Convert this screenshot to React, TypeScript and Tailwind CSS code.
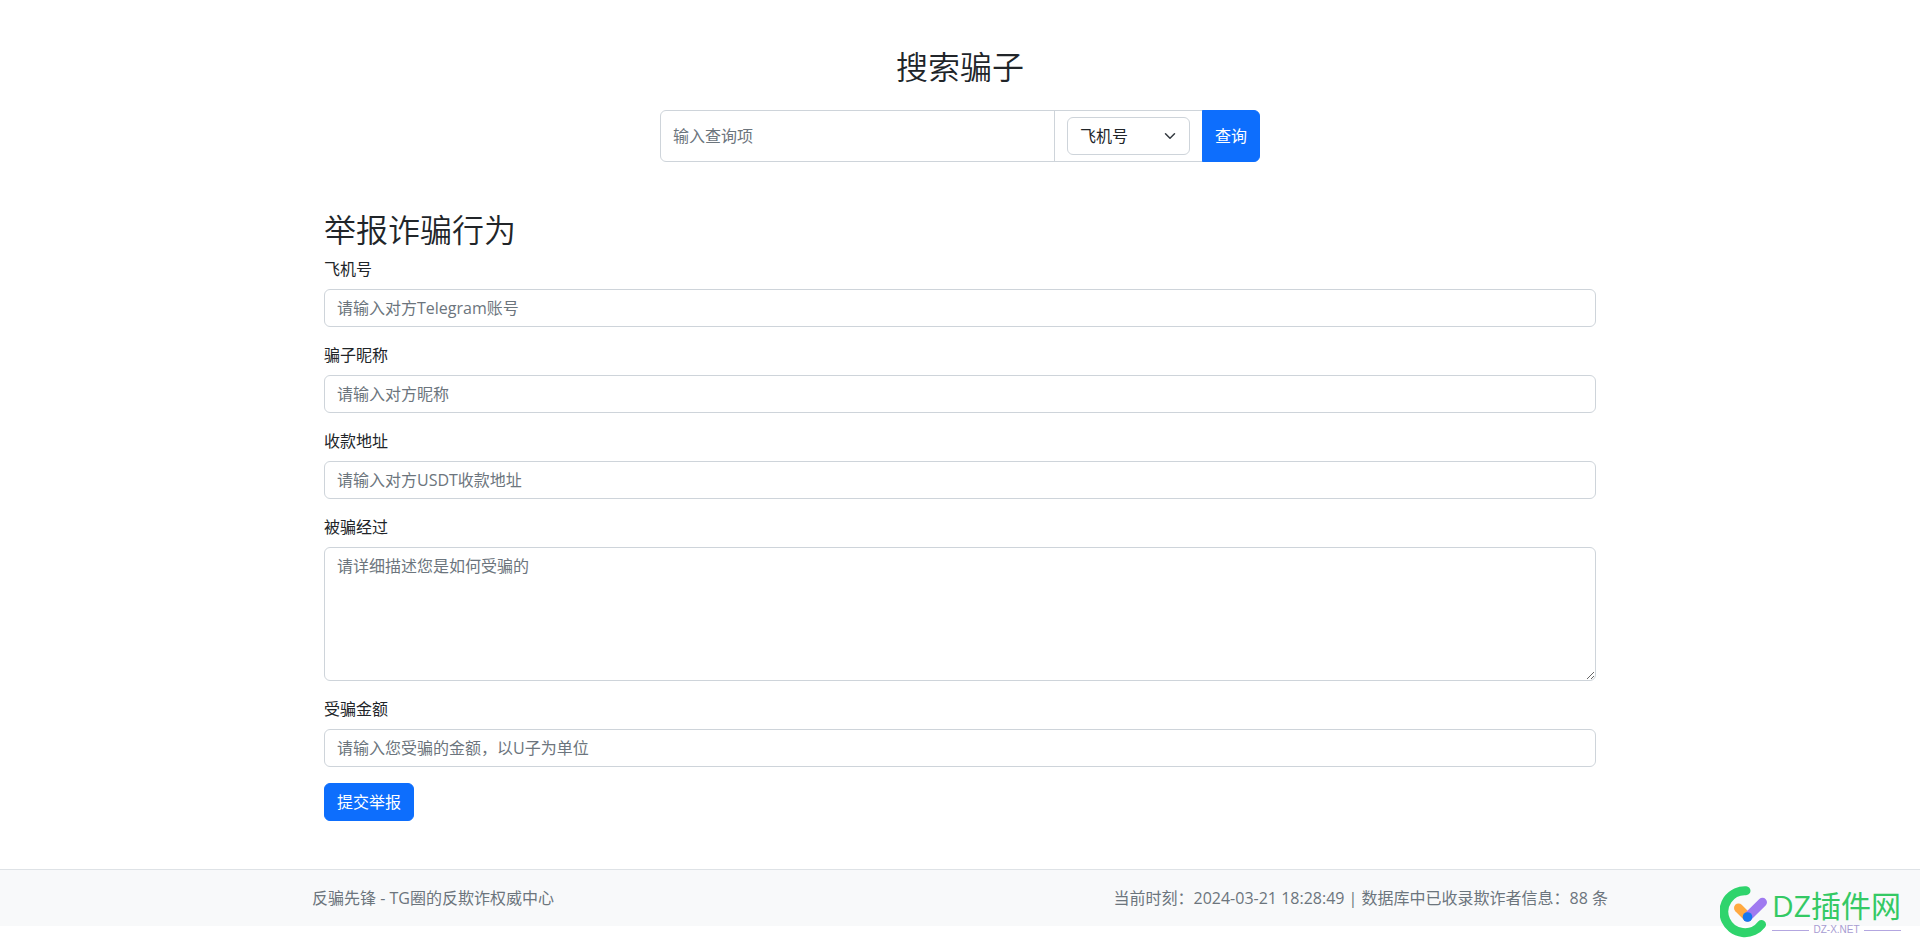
import { useState } from 'react';
import type { FormEvent, ReactNode } from 'react';

const controlClass =
  'block w-full rounded-md border border-[#ced4da] bg-white px-3 py-1.5 text-base leading-6 text-[#212529] placeholder:text-[#6c757d] placeholder:opacity-100 focus:border-[#86b7fe] focus:outline-none';

const searchTypes = ['飞机号', '骗子昵称', '收款地址'];

interface FieldProps {
  id: string;
  label: string;
  children: ReactNode;
}

function Field({ id, label, children }: FieldProps) {
  return (
    <div className="mb-4">
      <label htmlFor={id} className="mb-2 block">
        {label}
      </label>
      {children}
    </div>
  );
}

function SearchBar() {
  const [query, setQuery] = useState('');
  const [type, setType] = useState(searchTypes[0]);

  return (
    <form className="mx-auto flex w-full max-w-[600px]" onSubmit={(e: FormEvent) => e.preventDefault()}>
      <input
        type="text"
        aria-label="输入查询项"
        placeholder="输入查询项"
        value={query}
        onChange={(e) => setQuery(e.target.value)}
        className="min-w-0 flex-1 rounded-l-md border border-[#ced4da] px-3 placeholder:text-[#6c757d] placeholder:opacity-100 focus:outline-none"
      />
      <div className="-ml-px border border-[#ced4da] px-3 py-1.5">
        <div className="relative">
          <select
            aria-label="查询类型"
            value={type}
            onChange={(e) => setType(e.target.value)}
            className="block w-[123px] appearance-none rounded-md border border-[#ced4da] bg-white py-1.5 pr-9 pl-3 leading-6"
          >
            {searchTypes.map((item) => (
              <option key={item}>{item}</option>
            ))}
          </select>
          <svg
            viewBox="0 0 16 16"
            className="pointer-events-none absolute top-1/2 right-3.5 size-3 -translate-y-1/2"
            fill="none"
            stroke="#343a40"
            strokeWidth="2"
            strokeLinecap="round"
            strokeLinejoin="round"
          >
            <path d="m2 5 6 6 6-6" />
          </svg>
        </div>
      </div>
      <button type="submit" className="-ml-px shrink-0 rounded-r-md border border-[#0d6efd] bg-[#0d6efd] px-3 text-white">
        查询
      </button>
    </form>
  );
}

function ReportForm() {
  return (
    <form className="mt-12 px-3" onSubmit={(e: FormEvent) => e.preventDefault()}>
      <h2 className="mb-2 text-[32px] leading-[39px] font-[350]">举报诈骗行为</h2>
      <Field id="account" label="飞机号">
        <input id="account" type="text" placeholder="请输入对方Telegram账号" className={controlClass} />
      </Field>
      <Field id="nickname" label="骗子昵称">
        <input id="nickname" type="text" placeholder="请输入对方昵称" className={controlClass} />
      </Field>
      <Field id="address" label="收款地址">
        <input id="address" type="text" placeholder="请输入对方USDT收款地址" className={controlClass} />
      </Field>
      <Field id="detail" label="被骗经过">
        <textarea id="detail" rows={5} placeholder="请详细描述您是如何受骗的" className={controlClass} />
      </Field>
      <Field id="amount" label="受骗金额">
        <input id="amount" type="text" placeholder="请输入您受骗的金额，以U子为单位" className={controlClass} />
      </Field>
      <button type="submit" className="block rounded-md border border-[#0d6efd] bg-[#0d6efd] px-3 py-1.5 leading-6 text-white">
        提交举报
      </button>
    </form>
  );
}

function SiteBadge() {
  return (
    <div className="absolute right-[19px] bottom-3.5 flex items-center gap-1">
      <svg viewBox="0 0 48 52" className="h-[52px] w-12" fill="none" strokeLinecap="round">
        <path d="M26 4.700A21 21 0 1 0 41.500 38.500" stroke="#2fd46c" strokeWidth="9" />
        <path d="M18.500 22 27.500 31" stroke="#ffa940" strokeWidth="9" />
        <path d="M27.500 31 42.500 16.300" stroke="#9f7af0" strokeWidth="9" />
        <circle cx="27.500" cy="31" r="4.800" fill="#1677ee" />
      </svg>
      <div>
        <div className="text-[30px] leading-9 text-[#34c964]">DZ插件网</div>
        <div className="flex items-center gap-1 font-['Liberation_Sans',sans-serif] text-[10px] leading-3 text-[#a79cd2]">
          <span className="h-px flex-1 bg-[#b3a6e0]" />
          DZ-X.NET
          <span className="h-px flex-1 bg-[#b3a6e0]" />
        </div>
      </div>
    </div>
  );
}

export default function App() {
  return (
    <div className="relative min-h-screen bg-white font-['Open_Sans','Noto_Sans_CJK_SC',sans-serif] text-base leading-6 text-[#212529]">
      <main className="mx-auto max-w-[1320px] px-3 pt-[47px] pb-12">
        <h2 className="mb-6 text-center text-[32px] leading-[39px] font-[350]">搜索骗子</h2>
        <SearchBar />
        <ReportForm />
      </main>
      <footer className="border-t border-[#dee2e6] bg-[#f8f9fa] py-4 text-[#6c757d]">
        <div className="mx-auto flex max-w-[1320px] flex-wrap justify-between gap-x-6 px-3">
          <span>反骗先锋 - TG圈的反欺诈权威中心</span>
          <span>当前时刻：2024-03-21 18:28:49 | 数据库中已收录欺诈者信息：88 条</span>
        </div>
      </footer>
      <SiteBadge />
    </div>
  );
}
